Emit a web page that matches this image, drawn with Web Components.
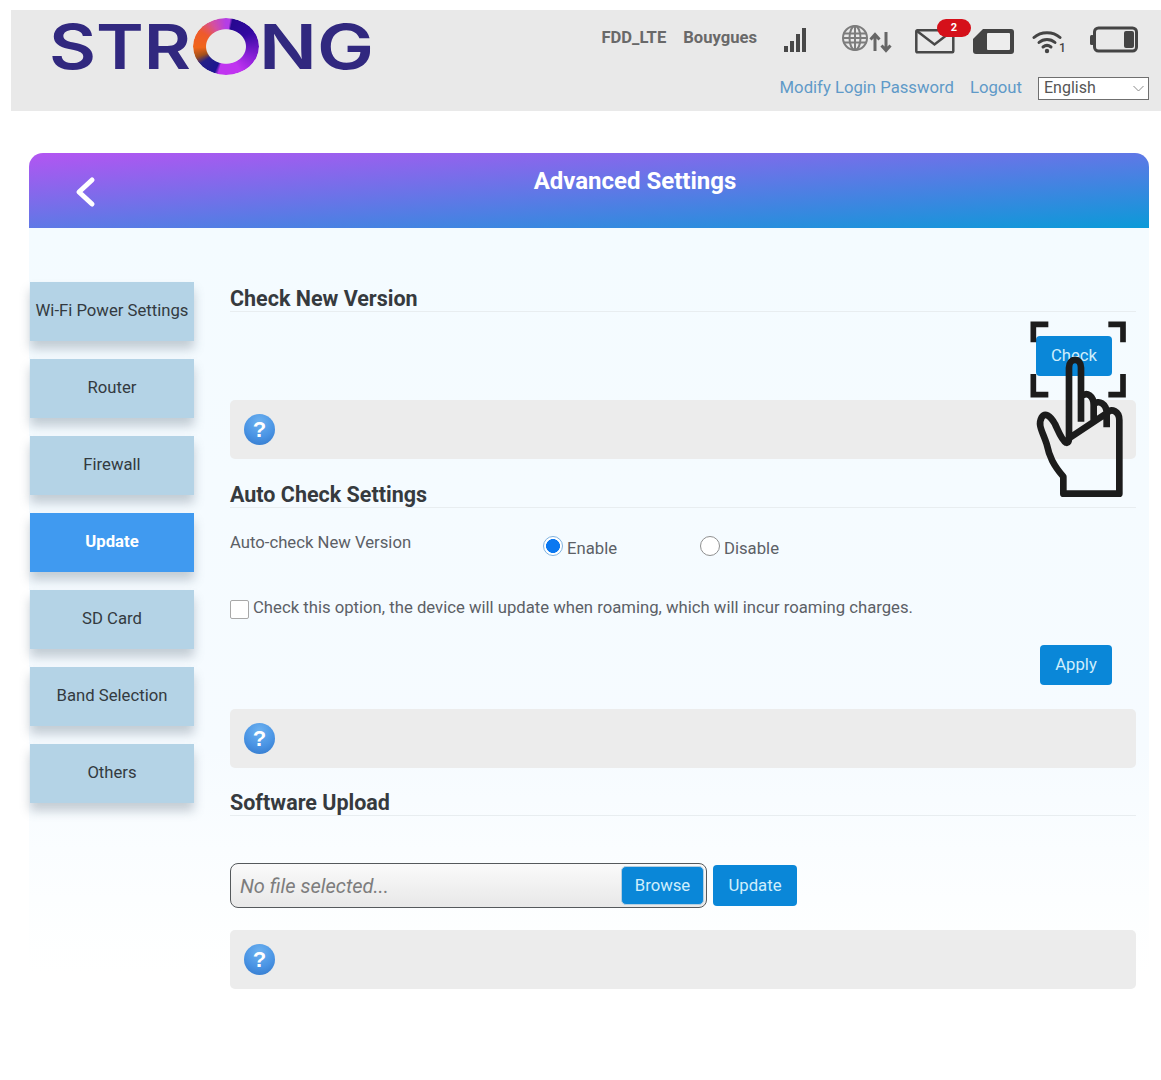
<!DOCTYPE html>
<html lang="en">
<head>
<meta charset="utf-8">
<title>Advanced Settings</title>
<style>
    html, body { margin: 0; background: #fff; }
    body {
        position: relative;
        width: 1161px;
        height: 1080px;
        overflow: hidden;
        font-family: Roboto, "Liberation Sans", sans-serif;
        color: #555;
    }
</style>
</head>
<body>
<router-header></router-header>
<settings-panel title="Advanced Settings">
    <side-nav slot="nav">
        <nav-item>Wi-Fi Power Settings</nav-item>
        <nav-item>Router</nav-item>
        <nav-item>Firewall</nav-item>
        <nav-item active>Update</nav-item>
        <nav-item>SD Card</nav-item>
        <nav-item>Band Selection</nav-item>
        <nav-item>Others</nav-item>
    </side-nav>
    <check-section></check-section>
    <auto-section></auto-section>
    <upload-section></upload-section>
</settings-panel>
<hand-overlay></hand-overlay>

<script>
class StrongLogo extends HTMLElement {
    constructor() {
        super();
        this.attachShadow({ mode: "open" });
        this.shadowRoot.innerHTML = `
            <style>
                :host { display: block; width: 330px; height: 90px; }
                svg { display: block; margin-left: -8px; }
                text { font-family: Inter, "Liberation Sans", sans-serif; font-weight: 600; font-size: 62px; fill: #31287f; }
                .ring {
                    width: 66px;
                    height: 57px;
                    border-radius: 50%;
                    background: conic-gradient(#b43ee6 0deg, #b43ee6 8deg, #26088f 14deg, #3208a0 60deg, #8a1fd8 112deg, #c034f0 150deg, #c034f0 196deg, #1d1590 204deg, #242088 236deg, #a0501c 250deg, #f0651a 268deg, #ee5a2c 300deg, #d450a0 330deg, #b43ee6 360deg);
                    -webkit-mask: radial-gradient(closest-side, transparent 59%, #000 62%);
                    mask: radial-gradient(closest-side, transparent 59%, #000 62%);
                }
            </style>
            <svg width="338" height="90" viewBox="-8 0 338 90">
                <text x="-2" y="59" textLength="142" lengthAdjust="spacingAndGlyphs">STR</text>
                <text x="143" y="59" style="fill:none">O</text>
                <foreignObject x="142" y="8" width="66" height="57">
                    <div xmlns="http://www.w3.org/1999/xhtml" class="ring"></div>
                </foreignObject>
                <text x="208" y="59" textLength="115" lengthAdjust="spacingAndGlyphs">NG</text>
            </svg>
        `;
    }
}

class StatusIcons extends HTMLElement {
    constructor() {
        super();
        this.attachShadow({ mode: "open" });
        this.shadowRoot.innerHTML = `
            <style>
                :host { display: flex; align-items: flex-start; height: 44px; color: #666; }
                svg { display: block; flex: none; }
                .net { font-size: 16.600px; font-weight: 700; line-height: 18px; margin-top: 10px; color: #696969; }
                .mail { position: relative; width: 58px; height: 36px; margin-left: 23px; }
                .mail svg { position: absolute; left: 0; top: 10px; }
                .badge {
                    position: absolute; left: 22px; top: 0;
                    width: 34px; height: 18px; border-radius: 9px;
                    background: #d5101a; color: #fff;
                    font-size: 11px; font-weight: 700; line-height: 18px; text-align: center;
                }
                .wifi { position: relative; }
                .wifi span { position: absolute; left: 27px; top: 12px; font-size: 12px; font-weight: 500; line-height: 12px; color: #444; }
            </style>
            <span class="net" style="margin-right:17px">FDD_LTE</span>
            <span class="net" style="margin-right:27px">Bouygues</span>
            <svg width="22" height="25" viewBox="0 0 22 25" style="margin-top:9px">
                <rect x="0" y="18" width="4" height="6" fill="#484848"/>
                <rect x="6" y="13" width="4" height="11" fill="#484848"/>
                <rect x="12" y="6" width="4" height="18" fill="#484848"/>
                <rect x="18" y="0" width="4" height="24" fill="#484848"/>
            </svg>
            <svg width="50" height="28" viewBox="0 0 50 28" style="margin:6px 0 0 36px" fill="none" stroke="#7c7c7c" stroke-width="2">
                <circle cx="13" cy="13" r="12"/>
                <ellipse cx="13" cy="13" rx="5.500" ry="12"/>
                <path d="M13 1v24M1.500 8.500h23M1 13h24M1.500 17.500h23"/>
                <path d="M33 26V10M28.500 14.500 33 9.500l4.500 5M44 7v18M39.500 20.500 44 25.500l4.500-5" stroke="#666" stroke-width="3"/>
            </svg>
            <div class="mail">
                <svg width="40" height="25" viewBox="0 0 40 25" fill="none" stroke="#484848" stroke-width="2.500">
                    <rect x="1.300" y="1.300" width="37" height="22" rx="1"/>
                    <path d="M2 2 19.500 15.500 37 2"/>
                </svg>
                <span class="badge">2</span>
            </div>
            <svg width="41" height="25" viewBox="0 0 41 25" style="margin:10px 0 0 0">
                <path d="M10 0h28a3 3 0 0 1 3 3v19a3 3 0 0 1-3 3H3a3 3 0 0 1-3-3V10z" fill="#444"/>
                <rect x="14" y="4" width="23" height="17" rx="1" fill="#ededed"/>
            </svg>
            <div class="wifi" style="margin:11px 0 0 18px;width:58px;height:26px">
                <svg width="30" height="24" viewBox="0 0 30 24" fill="none" stroke="#444" stroke-width="3" stroke-linecap="round">
                    <path d="M2 7.500C9 1 21 1 28 7.500"/>
                    <path d="M7 12.500c4.500-4 11.500-4 16 0"/>
                    <path d="M11 17c2.500-2 5.500-2 8 0"/>
                    <circle cx="15" cy="21" r="2.200" fill="#444" stroke="none"/>
                </svg>
                <span>1</span>
            </div>
            <svg width="48" height="27" viewBox="0 0 48 27" style="margin:7px 0 0 0">
                <rect x="0" y="9" width="4" height="10" rx="1.500" fill="#444"/>
                <rect x="4.500" y="2" width="42" height="23" rx="4" fill="none" stroke="#444" stroke-width="3"/>
                <rect x="34" y="5" width="10" height="17" rx="2" fill="#444"/>
            </svg>
        `;
    }
}

class RouterHeader extends HTMLElement {
    constructor() {
        super();
        this.attachShadow({ mode: "open" });
        this.shadowRoot.innerHTML = `
            <style>
                :host {
                    display: flex;
                    justify-content: space-between;
                    box-sizing: border-box;
                    height: 101px;
                    margin: 10px 0 0 11px;
                    padding: 0 12px 0 40px;
                    background: #e9e9e9;
                }
                .right { display: flex; flex-direction: column; align-items: flex-end; padding-top: 9px; }
                status-icons { margin-right: 11px; }
                .links { display: flex; align-items: center; margin-top: 13px; font-size: 16.700px; color: #5f9ac8; }
                .links a { color: inherit; text-decoration: none; margin-right: 16px; line-height: 24px; }
                .select { position: relative; width: 111px; height: 23px; }
                select {
                    appearance: none;
                    box-sizing: border-box;
                    width: 100%;
                    height: 100%;
                    border: 1px solid #6f6f6f;
                    border-radius: 0;
                    background: #fff;
                    padding: 0 0 2px 5px;
                    font: 16px Roboto, "Liberation Sans", sans-serif;
                    color: #555;
                }
                .select svg { position: absolute; right: 5px; top: 8px; }
            </style>
            <strong-logo></strong-logo>
            <div class="right">
                <status-icons></status-icons>
                <div class="links">
                    <a href="#">Modify Login Password</a>
                    <a href="#">Logout</a>
                    <div class="select">
                        <select><option>English</option></select>
                        <svg width="11" height="7" viewBox="0 0 11 7" fill="none" stroke="#8a8a8a"><path d="M.5 1 5.500 6l5-5"/></svg>
                    </div>
                </div>
            </div>
        `;
    }
}

class SettingsPanel extends HTMLElement {
    constructor() {
        super();
        this.attachShadow({ mode: "open" });
        this.shadowRoot.innerHTML = `
            <style>
                :host {
                    display: block;
                    margin: 42px 12px 0 29px;
                    height: 820px;
                    background: linear-gradient(180deg, #f4fbff 0, #f6fbff 70%, #fcfeff 90%, #ffffff 100%) 0 75px / 100% 745px no-repeat;
                }
                .head {
                    position: relative;
                    height: 75px;
                    border-radius: 14px 14px 0 0;
                    background: linear-gradient(to bottom right, #b355f2 0, #5f78e6 50%, #0b9ad8 100%);
                }
                h1 {
                    box-sizing: border-box;
                    margin: 0;
                    padding: 13px 0 0 92px;
                    text-align: center;
                    font-size: 24px;
                    line-height: 30px;
                    font-weight: 700;
                    color: #fff;
                }
                .back { position: absolute; left: 45px; top: 23px; }
                .body { display: flex; align-items: flex-start; }
                .nav { width: 201px; flex: none; padding-top: 54px; }
                .content { width: 906px; }
            </style>
            <div class="head">
                <svg class="back" width="24" height="32" viewBox="0 0 24 32" fill="none" stroke="#fff" stroke-width="5" stroke-linecap="round" stroke-linejoin="round"><path d="M18 4 5 16l13 12"/></svg>
                <h1></h1>
            </div>
            <div class="body">
                <div class="nav"><slot name="nav"></slot></div>
                <div class="content"><slot></slot></div>
            </div>
        `;
    }
    connectedCallback() {
        this.shadowRoot.querySelector('h1').textContent = this.getAttribute('title');
    }
}

class SideNav extends HTMLElement {
    constructor() {
        super();
        this.attachShadow({ mode: "open" });
        this.shadowRoot.innerHTML = `
            <style>
                :host { display: flex; flex-direction: column; gap: 18px; margin-left: 1px; width: 164px; }
            </style>
            <slot></slot>
        `;
    }
}

class NavItem extends HTMLElement {
    constructor() {
        super();
        this.attachShadow({ mode: "open" });
        this.shadowRoot.innerHTML = `
            <style>
                :host {
                    display: flex;
                    align-items: center;
                    justify-content: center;
                    box-sizing: border-box;
                    height: 59px;
                    padding-bottom: 2px;
                    background: #b4d3e6;
                    box-shadow: 0 8px 10px rgba(90, 110, 125, .33);
                    font-size: 16.700px;
                    color: #333a40;
                    white-space: nowrap;
                }
                :host([active]) { background: #409af0; color: #fff; font-weight: 700; }
            </style>
            <slot></slot>
        `;
    }
}

class SectionTitle extends HTMLElement {
    constructor() {
        super();
        this.attachShadow({ mode: "open" });
        this.shadowRoot.innerHTML = `
            <style>
                :host {
                    display: block;
                    border-bottom: 1px solid #e8edf0;
                    font-size: 21.500px;
                    line-height: 24px;
                    font-weight: 700;
                    color: #363a3e;
                }
            </style>
            <slot></slot>
        `;
    }
}

class HelpBar extends HTMLElement {
    constructor() {
        super();
        this.attachShadow({ mode: "open" });
        this.shadowRoot.innerHTML = `
            <style>
                :host {
                    display: flex;
                    align-items: center;
                    box-sizing: border-box;
                    height: 59px;
                    padding-left: 14px;
                    border-radius: 5px;
                    background: #ececec;
                }
                .q {
                    width: 31px;
                    height: 31px;
                    border-radius: 50%;
                    background: radial-gradient(circle at 50% 25%, #6db2f0 0, #4a94e4 55%, #2f75c9 100%);
                    color: #fff;
                    font: 700 22px/31px "Liberation Sans", sans-serif;
                    text-align: center;
                }
            </style>
            <div class="q">?</div>
        `;
    }
}

class UiButton extends HTMLElement {
    constructor() {
        super();
        this.attachShadow({ mode: "open" });
        this.shadowRoot.innerHTML = `
            <style>
                :host {
                    display: inline-flex;
                    align-items: center;
                    justify-content: center;
                    box-sizing: border-box;
                    height: 40px;
                    padding-bottom: 1px;
                    border-radius: 4px;
                    background: #0a87d8;
                    color: #cfeefc;
                    font-size: 16.700px;
                }
            </style>
            <slot></slot>
        `;
    }
}

class CheckSection extends HTMLElement {
    constructor() {
        super();
        this.attachShadow({ mode: "open" });
        this.shadowRoot.innerHTML = `
            <style>
                :host { display: block; padding-top: 59px; }
                .row { display: flex; justify-content: flex-end; padding: 24px 24px 24px 0; }
                ui-button { width: 76px; }
            </style>
            <section-title>Check New Version</section-title>
            <div class="row"><ui-button>Check</ui-button></div>
            <help-bar></help-bar>
        `;
    }
}

class AutoSection extends HTMLElement {
    constructor() {
        super();
        this.attachShadow({ mode: "open" });
        this.shadowRoot.innerHTML = `
            <style>
                :host { display: block; padding-top: 24px; font-size: 16.700px; color: #5c6066; }
                .line { display: flex; align-items: flex-start; height: 60px; padding-top: 25px; box-sizing: border-box; }
                .label { width: 313px; line-height: 20px; }
                label { display: flex; align-items: center; line-height: 20px; }
                label.en { width: 157px; }
                input { appearance: none; margin: 0 4px 0 0; width: 20px; height: 20px; box-sizing: border-box; background: #fff; }
                input[type=radio] { border: 1.500px solid #8f8f8f; border-radius: 50%; position: relative; top: 3px; }
                input[type=radio]:checked {
                    border: 1.500px solid #7fb2e0;
                    background: radial-gradient(circle closest-side, #0b78f0 0, #0b78f0 74%, #fff 80%);
                }
                .radio-text { position: relative; top: 6px; }
                .opt { display: flex; align-items: center; height: 20px; margin-top: 30px; }
                .opt input { border: 1.500px solid #a8a8a8; border-radius: 2px; margin-right: 4px; width: 19px; height: 19px; position: relative; top: 1px; }
                .opt span { position: relative; top: -1px; }
                .row { display: flex; justify-content: flex-end; padding: 27px 24px 24px 0; }
                ui-button { width: 72px; }
            </style>
            <section-title>Auto Check Settings</section-title>
            <div class="line">
                <div class="label">Auto-check New Version</div>
                <label class="en"><input type="radio" name="auto" checked><span class="radio-text">Enable</span></label>
                <label><input type="radio" name="auto"><span class="radio-text">Disable</span></label>
            </div>
            <div class="opt">
                <input type="checkbox">
                <span>Check this option, the device will update when roaming, which will incur roaming charges.</span>
            </div>
            <div class="row"><ui-button>Apply</ui-button></div>
            <help-bar></help-bar>
        `;
    }
}

class FilePicker extends HTMLElement {
    constructor() {
        super();
        this.attachShadow({ mode: "open" });
        this.shadowRoot.innerHTML = `
            <style>
                :host {
                    display: flex;
                    align-items: center;
                    justify-content: space-between;
                    box-sizing: border-box;
                    width: 477px;
                    height: 45px;
                    padding: 0 2px 0 9px;
                    border: 1px solid #55595c;
                    border-radius: 8px;
                    background: linear-gradient(180deg, #fafafa 0, #e8e8e8 100%);
                }
                em { font-size: 20px; color: #7d7d7d; }
                ui-button { width: 83px; height: 39px; border: 1px solid #b5cfe0; border-radius: 5px; }
            </style>
            <em>No file selected...</em>
            <ui-button>Browse</ui-button>
        `;
    }
}

class UploadSection extends HTMLElement {
    constructor() {
        super();
        this.attachShadow({ mode: "open" });
        this.shadowRoot.innerHTML = `
            <style>
                :host { display: block; padding-top: 23px; }
                .row { display: flex; align-items: center; gap: 6px; padding: 47px 0 22px; }
                .row ui-button.go { width: 84px; height: 41px; }
            </style>
            <section-title>Software Upload</section-title>
            <div class="row">
                <file-picker></file-picker>
                <ui-button class="go">Update</ui-button>
            </div>
            <help-bar></help-bar>
        `;
    }
}

class HandOverlay extends HTMLElement {
    constructor() {
        super();
        this.attachShadow({ mode: "open" });
        this.shadowRoot.innerHTML = `
            <style>
                :host { position: absolute; left: 1000px; top: 300px; width: 161px; height: 210px; pointer-events: none; }
                svg { display: block; }
            </style>
            <svg width="161" height="210" viewBox="0 0 483 630" fill="none" stroke="#1c1c1c">
                <g stroke-width="17">
                    <path d="M145 73H100V127"/>
                    <path d="M325 73H369V127"/>
                    <path d="M100 222V284H145"/>
                    <path d="M369 222V284H325"/>
                </g>
                <path stroke-width="20" stroke-linejoin="round" d="M207 415V203C207 172 243 172 243 203V365M243 290C262 272 281 290 281 315V365M281 315C295 296 320 312 320 340V382M320 340C335 322 358 335 358 360V581H190V530C160 495 148 470 140 432C128 395 112 375 125 352C135 337 150 345 165 372C178 400 185 420 198 428C205 430 207 422 207 415Z"/>
            </svg>
        `;
    }
}

customElements.define('strong-logo', StrongLogo);
customElements.define('status-icons', StatusIcons);
customElements.define('router-header', RouterHeader);
customElements.define('settings-panel', SettingsPanel);
customElements.define('side-nav', SideNav);
customElements.define('nav-item', NavItem);
customElements.define('section-title', SectionTitle);
customElements.define('help-bar', HelpBar);
customElements.define('ui-button', UiButton);
customElements.define('check-section', CheckSection);
customElements.define('auto-section', AutoSection);
customElements.define('file-picker', FilePicker);
customElements.define('upload-section', UploadSection);
customElements.define('hand-overlay', HandOverlay);
</script>
</body>
</html>
